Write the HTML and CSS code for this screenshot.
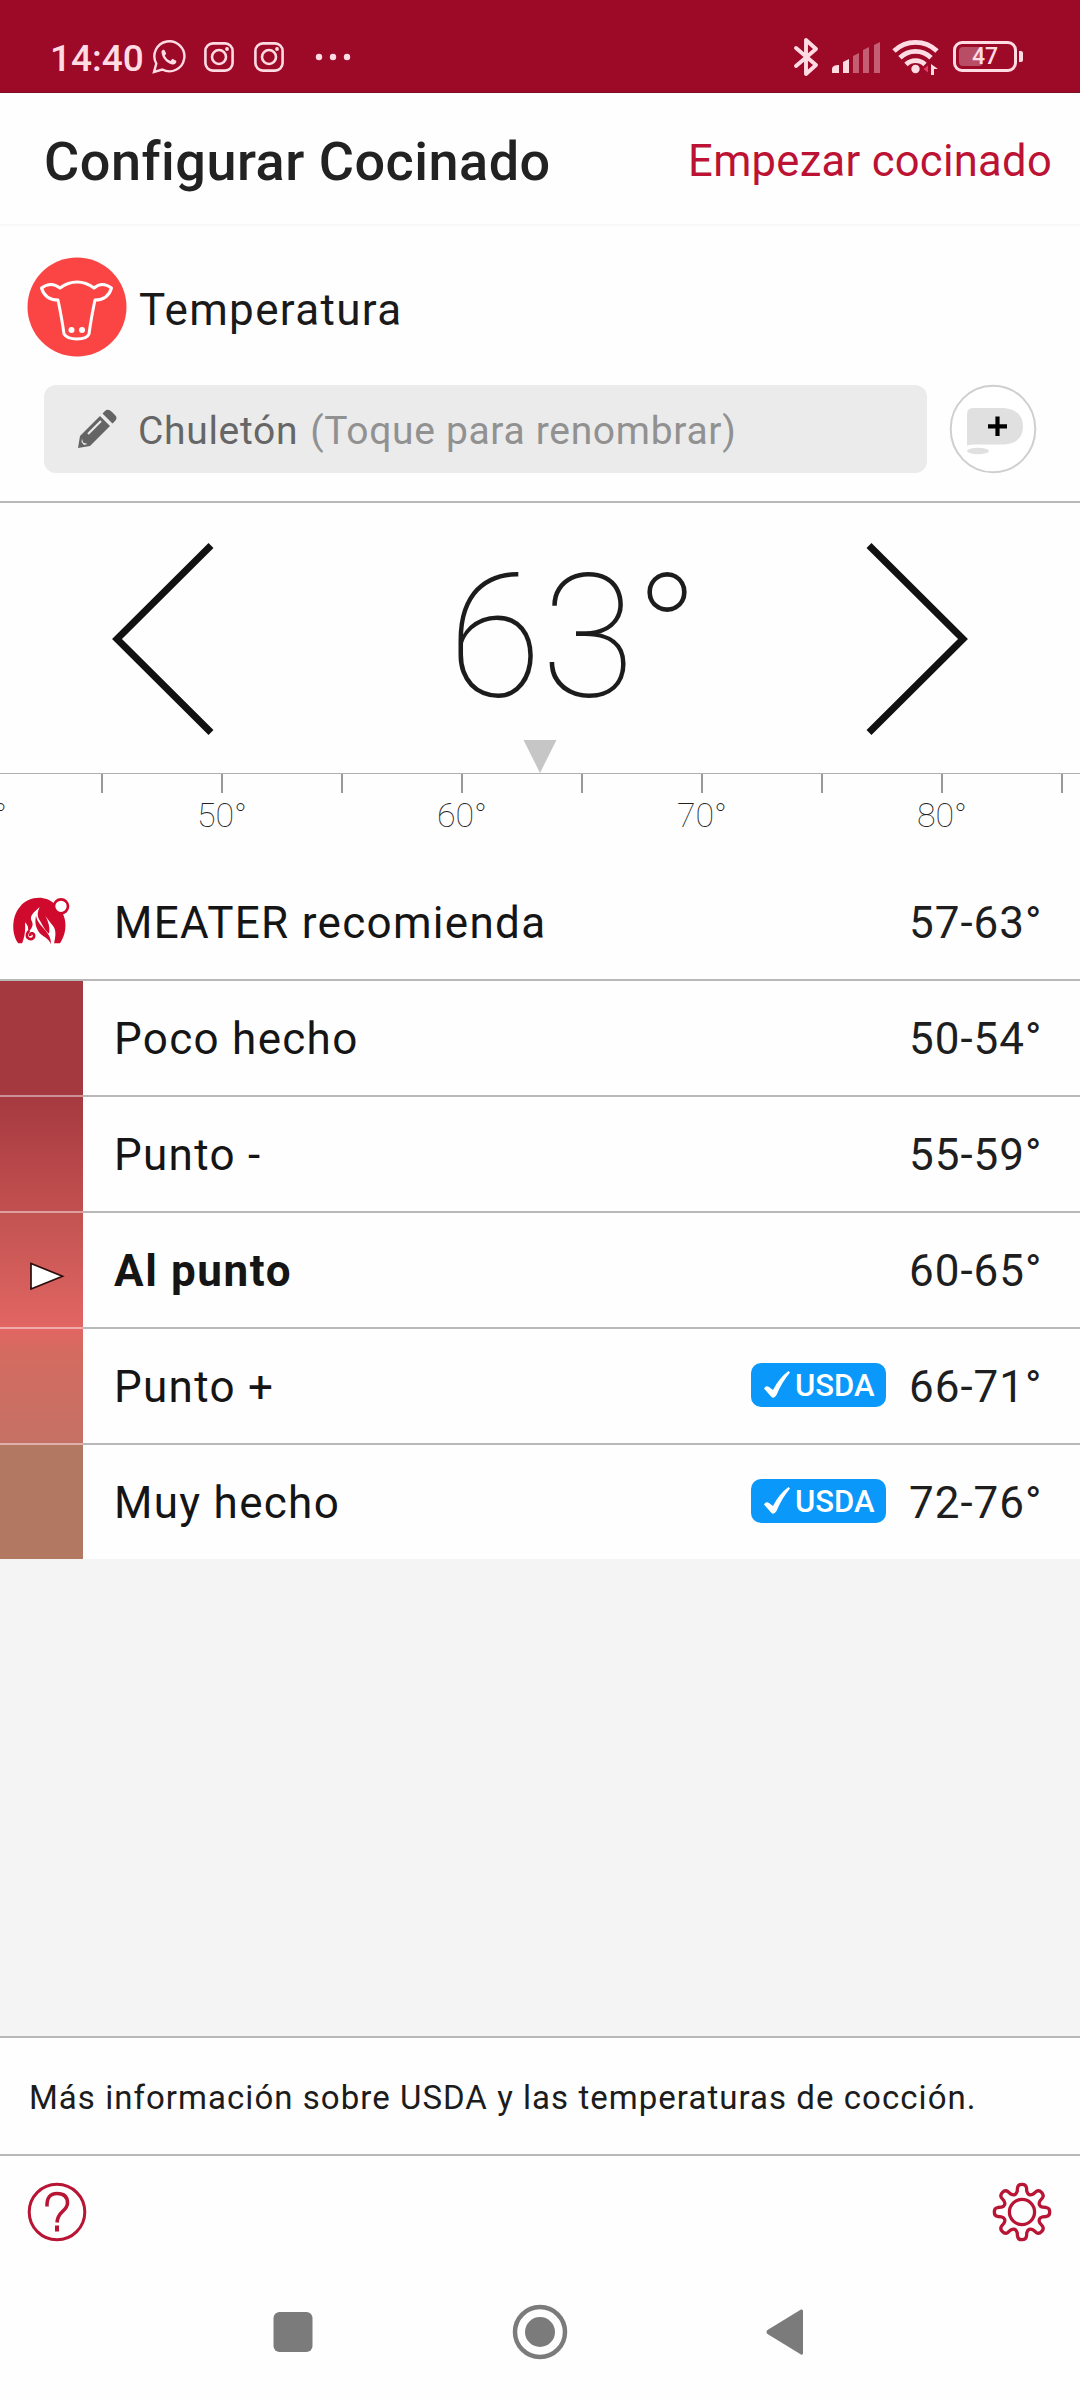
FILE: index.html
```html
<!DOCTYPE html>
<html lang="es">
<head>
<meta charset="utf-8">
<title>Configurar Cocinado</title>
<link rel="stylesheet" href="styles.css">
</head>
<body>
<div class="screen">
  <header class="status">
    <span class="clock">14:40</span>
    <svg class="ic-whatsapp" width="34" height="34" viewBox="0 0 34 34" fill="none" stroke="#ffdbe4" stroke-width="2.4"><path d="M2 32l2.300-8.400a15 15 0 1 1 6 5.900z"/><path d="M9.500 12c0-1.600 1.800-3 3-1.700l1.700 3.200-1.400 2.300c1.500 2.600 3 4 5.700 5.200l1.900-2.200 3.800 1.900c.8 2-1.600 3.800-3.600 3.800-5.500-.6-11-6.900-11.100-12.500z" fill="#ffdbe4" stroke="none"/></svg>
    <svg class="ic-insta" width="30" height="30" viewBox="0 0 30 30" fill="none" stroke="#ffdbe4" stroke-width="2.600"><rect x="1.400" y="1.400" width="27.200" height="27.200" rx="7.500"/><circle cx="15" cy="15" r="7"/><circle cx="23" cy="7" r="1.900" fill="#ffdbe4" stroke="none"/></svg>
    <svg class="ic-insta second" width="30" height="30" viewBox="0 0 30 30" fill="none" stroke="#ffdbe4" stroke-width="2.600"><rect x="1.400" y="1.400" width="27.200" height="27.200" rx="7.500"/><circle cx="15" cy="15" r="7"/><circle cx="23" cy="7" r="1.900" fill="#ffdbe4" stroke="none"/></svg>
    <svg class="ic-more" width="36" height="8" viewBox="0 0 36 8" fill="#ffdbe4"><circle cx="4" cy="4" r="3.200"/><circle cx="18" cy="4" r="3.200"/><circle cx="32" cy="4" r="3.200"/></svg>
    <svg class="ic-bluetooth" width="26" height="40" viewBox="0 0 26 40" fill="none" stroke="#ffdbe4" stroke-width="3.900" stroke-linecap="round" stroke-linejoin="round"><path d="M3 11l20 17-10 9V3l10 9L3 29"/></svg>
    <svg class="ic-signal" width="48" height="32" viewBox="0 0 48 32" fill="#ffdbe4"><path d="M0 31v-4q0-4 7-4v8z"/><path d="M11 31V20l6-3v14z"/><g opacity=".4"><path d="M21 31V14l6-3v20zM31 31V8l6-3v26zM42 31V3l6-3v31z"/></g></svg>
    <svg class="ic-wifi" width="48" height="36" viewBox="0 0 48 36" fill="none" stroke="#ffdbe4" stroke-width="4.800"><path d="M2 12a31 31 0 0 1 43 0M8 18.800a22 22 0 0 1 31 0M14 25.500a13.500 13.500 0 0 1 19 0"/><circle cx="23.500" cy="30" r="4.200" fill="#ffdbe4" stroke="none"/><path d="M36 26.500v7l-4.500-3.500z" fill="#e04065" stroke="none"/><path d="M39 36V25l7 5h-4v6z" fill="#ffdbe4" stroke="none"/></svg>
    <span class="battery"><span class="level"></span><b>47</b></span><span class="nub"></span>
  </header>

  <div class="titlebar">
    <h1>Configurar Cocinado</h1>
    <a class="start">Empezar cocinado</a>
  </div>

  <section class="setup">
    <div class="kind">
      <svg width="100" height="100" viewBox="0 0 100 100"><circle cx="50" cy="50" r="49.500" fill="#fb4545"/><g fill="none" stroke="#fff" stroke-width="3" stroke-linejoin="round"><path d="M33 31Q24 24 14.500 31Q18 43 31 43Q35 62 37 77Q40 82 50 82Q60 82 62 77Q64 62 68 43Q81 43 84.500 31Q75 24 67 31Q59 25 50 25Q41 25 33 31z"/></g><circle cx="44.500" cy="73" r="3" fill="#fff"/><circle cx="55" cy="73" r="3" fill="#fff"/></svg>
      <span class="kind-label">Temperatura</span>
    </div>
    <div class="rename">
      <div class="field">
        <svg width="40" height="40" viewBox="0 0 40 40"><path fill="#646464" d="M1 39L3 27L23 7L33 17L13 37zM25.500 4.500L28 2Q31-1 35 3L38 6Q41 9 38 12L35.500 14.500z"/><path d="M11 25L24 12" stroke="#ebebeb" stroke-width="2.200"/><path fill="#ebebeb" d="M5 29.500L6 33.500L10.500 35L7 36L4.500 33z"/></svg>
        <span class="cut">Chuletón</span><span class="hint">(Toque para renombrar)</span>
      </div>
      <svg class="note" width="88" height="90" viewBox="0 0 88 90"><ellipse cx="44" cy="45" rx="42.300" ry="43.300" fill="#fff" stroke="#cfcfcf" stroke-width="2"/><path fill="#e0e0e0" d="M18 62V30q0-6 6-6h31q19 2 19 18.500T55 60.500H24q-5 0-6 1.500z"/><ellipse cx="29" cy="67" rx="11" ry="3.300" fill="#e0e0e0"/><path d="M48.500 32.500V52M39 42.300H58" stroke="#000" stroke-width="4.200"/></svg>
    </div>
  </section>

  <section class="dial">
    <div class="stepper">
      <svg width="102" height="194" viewBox="0 0 102 194" fill="none" stroke="#111" stroke-width="7"><path d="M99 3.500L5 97L99 190.500"/></svg>
      <div class="temp"><span>63°</span></div>
      <svg width="102" height="194" viewBox="0 0 102 194" fill="none" stroke="#111" stroke-width="7"><path d="M3 3.500L97 97L3 190.500"/></svg>
    </div>
    <svg class="pointer" width="34" height="33" viewBox="0 0 34 33"><path d="M.5 0h33L17 33z" fill="#c6c6c6"/></svg>
    <div class="ruler">
      <span class="tick first"><i>40°</i></span><span class="tick"></span><span class="tick"><i>50°</i></span><span class="tick"></span><span class="tick"><i>60°</i></span><span class="tick"></span><span class="tick"><i>70°</i></span><span class="tick"></span><span class="tick"><i>80°</i></span><span class="tick"></span>
    </div>
  </section>

  <ul class="levels">
    <li class="row meater">
      <span class="swatch"><svg width="75" height="70" viewBox="0 0 225 210"><path fill="#d00a2d" d="M40 175C20 150 18 95 45 65C70 34 120 28 150 58C188 85 190 140 165 175z"/><path fill="#fff" d="M50 178C58 160 62 140 60 112C69 120 72 130 68 143C80 132 88 120 79 106C74 92 86 82 104 66C97 82 96 92 103 104C112 118 118 134 132 146C136 128 130 110 121 92C130 106 136 112 145 124C156 140 150 160 147 178z"/><path fill="#d00a2d" d="M93 92C100 128 140 138 138 178C134 164 118 156 106 146C94 132 88 116 93 92z"/><path fill="none" stroke="#d00a2d" stroke-width="8" d="M76 153q-2-10 7-8q8 5 2 14q-9 8-18-2q-4-12 6-20"/><circle cx="168" cy="64" r="21" fill="#fff" stroke="#d00a2d" stroke-width="8"/></svg></span>
      <span class="name">MEATER recomienda</span><span class="range">57-63°</span>
    </li>
    <li class="row rare"><span class="swatch"></span><span class="name">Poco hecho</span><span class="range">50-54°</span></li>
    <li class="row medrare"><span class="swatch"></span><span class="name">Punto -</span><span class="range">55-59°</span></li>
    <li class="row medium"><span class="swatch"><svg width="36" height="31" viewBox="0 0 36 31"><path d="M2 2.500V28L33.500 15.200z" fill="#fff" stroke="#2c0d0d" stroke-width="1.700"/></svg></span><span class="name">Al punto</span><span class="range">60-65°</span></li>
    <li class="row medwell"><span class="swatch"></span><span class="name">Punto +</span><span class="usda"><svg width="26" height="28" viewBox="0 0 26 28"><path d="M0 17.500Q2 14 5 16L9 19Q15 7 24.500 0L26 1.500Q18 11 12.500 24Q10 28 7.500 26z" fill="#fff"/></svg>USDA</span><span class="range">66-71°</span></li>
    <li class="row well"><span class="swatch"></span><span class="name">Muy hecho</span><span class="usda"><svg width="26" height="28" viewBox="0 0 26 28"><path d="M0 17.500Q2 14 5 16L9 19Q15 7 24.500 0L26 1.500Q18 11 12.500 24Q10 28 7.500 26z" fill="#fff"/></svg>USDA</span><span class="range">72-76°</span></li>
  </ul>

  <div class="filler"></div>

  <div class="info"><span>Más información sobre USDA y las temperaturas de cocción.</span></div>

  <div class="tools">
    <svg width="60" height="60" viewBox="0 0 60 60" fill="none" stroke="#b81535" stroke-width="3"><circle cx="30" cy="30" r="27.800"/><path d="M20 24.500Q19.500 11.500 30 11.500T40.500 21Q40.500 25 35.500 29.500T30 40.500" stroke-width="3.600"/><path d="M30 43.500v6" stroke-width="4"/></svg>
    <svg width="60" height="62" viewBox="-31 -32 62 64" fill="none" stroke="#b81535" stroke-width="3.400" stroke-linejoin="round"><circle r="13"/><path class="gear" d=""/></svg>
  </div>

  <nav class="navbar">
    <svg width="40" height="42" viewBox="0 0 40 42"><rect x=".5" y="1" width="39" height="40" rx="6" fill="#7b7b7b"/></svg>
    <svg width="56" height="56" viewBox="0 0 56 56"><circle cx="28" cy="28" r="25" fill="none" stroke="#7b7b7b" stroke-width="4.500"/><circle cx="28" cy="28" r="15" fill="#7b7b7b"/></svg>
    <svg width="38" height="48" viewBox="0 0 38 48"><path d="M1.500 22L35 1.500Q37 1 37 3V45Q37 47.500 35 46.500L1.500 26Q-.5 24 1.500 22z" fill="#7b7b7b"/></svg>
  </nav>
</div>
<script src="gear.js"></script>
</body>
</html>
```
FILE: gear.js
```js
// Builds the settings cog outline: eight rounded teeth around the hub.
(function () {
  var d = "";
  function pt(r, a) {
    var t = a * Math.PI / 180;
    return (r * Math.sin(t)).toFixed(2) + " " + (-r * Math.cos(t)).toFixed(2);
  }
  for (var i = 0; i < 8; i++) {
    var a = i * 45;
    d += (i ? "L" : "M") + pt(22, a - 13) +
      "L" + pt(25.5, a - 10.5) + "Q" + pt(29, a - 8) + " " + pt(28.6, a) +
      "Q" + pt(29, a + 8) + " " + pt(25.5, a + 10.5) +
      "L" + pt(22, a + 13) + "Q" + pt(17.2, a + 22.5) + " " + pt(22, a + 32);
  }
  document.querySelector(".gear").setAttribute("d", d + "z");
})();
```
FILE: styles.css
```css
* { box-sizing: border-box; }
body { margin: 0; background: #fefefe; color: #1a1a1a; font-family: Roboto, sans-serif; }
svg { display: block; flex: none; }
.screen { width: 1080px; height: 2400px; display: flex; flex-direction: column; overflow: hidden; }

.status { height: 93px; flex: none; display: flex; align-items: center; padding: 21px 57px 0 50px; background: #9c0a28; color: #ffdbe4; border-bottom: 1px solid #7c1027; }
.clock { width: 102px; font-size: 37px; font-weight: 500; line-height: 40px; padding-top: 5px; }
.ic-insta { margin-left: 18px; }
.ic-insta.second { margin-left: 20px; }
.ic-more { margin-left: 31px; }
.ic-bluetooth { margin-left: auto; }
.ic-signal { margin-left: 13px; margin-top: 2px; }
.ic-wifi { margin-left: 12px; }
.battery { position: relative; width: 64px; height: 31px; margin-left: 13px; border: 3px solid #ffdbe4; border-radius: 9px; display: flex; justify-content: center; align-items: center; font-size: 23px; line-height: 25px; }
.battery b { position: relative; font-weight: 500; }
.level { position: absolute; left: 3px; top: 3px; width: 24px; height: 19px; border-radius: 4px; background: #b84d66; }
.nub { width: 4px; height: 11px; margin-left: 2px; border-radius: 0 2px 2px 0; background: #ffdbe4; }

.titlebar { height: 133px; flex: none; display: flex; justify-content: space-between; align-items: flex-start; padding: 38px 28px 0 44px; border-bottom: 2px solid #f8f8f8; }
h1 { margin: 0; font-size: 54px; line-height: 62px; font-weight: 500; letter-spacing: .5px; color: #222; }
.start { margin-top: 5px; font-size: 43.500px; line-height: 52px; letter-spacing: .3px; color: #bc1234; }

.setup { height: 277px; flex: none; padding-top: 31px; border-bottom: 2px solid #b8b8b8; }
.kind { display: flex; align-items: center; padding-left: 27px; }
.kind-label { margin: 6px 0 0 12px; font-size: 44px; letter-spacing: 1.350px; }
.rename { display: flex; align-items: center; padding: 27px 43px 0 44px; }
.field { width: 884px; height: 88px; display: flex; align-items: center; padding-left: 33px; border-radius: 12px; background: #ebebeb; font-size: 39px; letter-spacing: .680px; color: #666; }
.cut { margin: 3px 0 0 21px; }
.hint { margin: 3px 0 0 12px; color: #919191; }
.note { margin-left: 22px; }

.dial { height: 362px; flex: none; display: flex; flex-direction: column; }
.stepper { height: 237px; display: flex; justify-content: space-between; padding: 39px 112px 0; }
.temp { margin-left: 67px; font-size: 172px; font-weight: 100; line-height: 191px; letter-spacing: -.8px; color: #1c1c1c; }
.pointer { margin-left: 523px; }
.ruler { display: flex; width: 1200px; margin-left: -19px; border-top: 1px solid #b0b0b0; }
.tick { width: 120px; height: 19px; flex: none; border-left: 2px solid #999; display: flex; }
.tick i { font-style: normal; font-size: 34px; font-weight: 100; line-height: 40px; width: 120px; margin: 21px 0 0 -61px; flex: none; text-align: center; color: #222; }

.levels { margin: 0; padding: 0; list-style: none; height: 694px; flex: none; }
.row { height: 116px; display: flex; align-items: center; padding-right: 39px; border-bottom: 2px solid #b8b8b8; font-size: 44px; color: #151515; }
.row.well { height: 114px; border: 0; }
.swatch { width: 83px; height: 114px; margin-right: 31px; display: flex; align-items: center; flex: none; }
.row:not(.meater):not(.well) .swatch { height: 116px; margin-bottom: -2px; border-bottom: 2px solid rgba(255,255,255,.45); background-clip: border-box; background-origin: border-box; }
.meater .swatch { padding: 0 0 4px 5px; }
.rare .swatch { background: #a4393f; }
.medrare .swatch { background: linear-gradient(#a53a40, #c35050); }
.medium .swatch { background: linear-gradient(#c15351, #e26663); padding: 12px 0 0 29px; }
.medwell .swatch { background: linear-gradient(#e26663, #d46b60 20%, #c57165); }
.well .swatch { background: #b37861; }
.name { flex: 1; padding-top: 2px; letter-spacing: 1.300px; }
.medium .name { font-weight: 700; letter-spacing: 1.600px; }
.range { width: 132px; padding-top: 2px; letter-spacing: 1px; text-align: right; white-space: nowrap; color: #1e1e1e; }
.usda { width: 135px; height: 44px; margin: 0 23px 2px 0; padding-left: 13px; display: flex; align-items: center; gap: 5px; border-radius: 10px; background: #0a98fb; color: #fff; font-size: 31px; font-weight: 500; }

.filler { height: 477px; flex: none; background: #f4f4f4; }
.info { height: 120px; flex: none; border-top: 2px solid #b8b8b8; border-bottom: 2px solid #b8b8b8; display: flex; align-items: center; padding: 3px 29px 0; font-size: 33px; letter-spacing: 1.040px; color: #1c1c1c; white-space: nowrap; }
.tools { height: 110px; flex: none; display: flex; justify-content: space-between; align-items: center; padding: 2px 28px 0 27px; }
.navbar { height: 132px; flex: none; display: flex; justify-content: space-between; align-items: center; padding: 0 276px 0 273px; }
```
